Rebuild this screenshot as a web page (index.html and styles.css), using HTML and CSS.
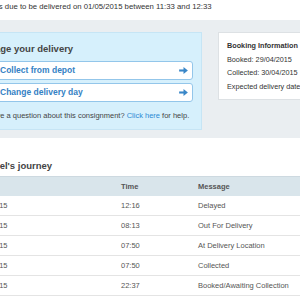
FILE: index.html
```html
<!DOCTYPE html>
<html lang="en">
<head>
  <meta charset="UTF-8">
  <title>Track your parcel</title>
  <link rel="stylesheet" href="styles.css">
</head>
<body>

  <div class="page">
    <p class="due">Your parcel is due to be delivered on 01/05/2015 between 11:33 and 12:33</p>

    <div class="band">
      <div class="manage">
        <h2>Manage your delivery</h2>
        <a class="action" href="#">
          <span>Collect from depot</span>
          <svg width="9" height="7" viewBox="0 0 10 8"><rect x="0" y="2.8" width="6" height="2.4" fill="#3a87c8"/><polygon points="5,0 10,4 5,8" fill="#3a87c8"/></svg>
        </a>
        <a class="action" href="#">
          <span>Change delivery day</span>
          <svg width="9" height="7" viewBox="0 0 10 8"><rect x="0" y="2.8" width="6" height="2.4" fill="#3a87c8"/><polygon points="5,0 10,4 5,8" fill="#3a87c8"/></svg>
        </a>
        <p class="help">Have a question about this consignment? <a href="#">Click here</a> for help.</p>
      </div>

      <div class="booking">
        <h3>Booking Information</h3>
        <p>Booked: 29/04/2015</p>
        <p>Collected: 30/04/2015</p>
        <p>Expected delivery date: 01/05/2015</p>
      </div>
    </div>

    <div class="journey">
      <h2>Your parcel's journey</h2>
      <table>
        <colgroup>
          <col class="col-date">
          <col class="col-time">
          <col>
        </colgroup>
        <thead>
          <tr><th>Date</th><th>Time</th><th>Message</th></tr>
        </thead>
        <tbody id="events"></tbody>
      </table>
    </div>
  </div>

  <script>
    const events = [
      { date: '01/05/2015', time: '12:16', msg: 'Delayed' },
      { date: '01/05/2015', time: '08:13', msg: 'Out For Delivery' },
      { date: '01/05/2015', time: '07:50', msg: 'At Delivery Location' },
      { date: '30/04/2015', time: '07:50', msg: 'Collected' },
      { date: '29/04/2015', time: '22:37', msg: 'Booked/Awaiting Collection' }
    ];

    const body = document.getElementById('events');
    events.forEach(e => {
      const tr = document.createElement('tr');
      tr.innerHTML = `<td>${e.date}</td><td>${e.time}</td><td>${e.msg}</td>`;
      body.appendChild(tr);
    });
  </script>

</body>
</html>
```

FILE: styles.css
```css
body {
  margin: 0;
  font-family: 'Liberation Sans', Arial, sans-serif;
  color: #333;
  background: #fff;
  overflow: hidden;
}

.page {
  margin-left: -70px;
  width: 480px;
}

.due {
  margin: 0;
  padding: 0 0 6px 26px;
  font-size: 7.75px;
  line-height: 14px;
}

.band {
  display: flex;
  align-items: flex-start;
  gap: 16px;
  background: #eaeef1;
  padding: 12px 0 8px 34px;
}

.manage {
  flex: none;
  width: 220px;
  background: #d6f0fc;
  border: 1px solid #c6e5f5;
  padding: 10px 8px 7px 8px;
}

.manage h2 {
  margin: 0 0 6px 3px;
  font-size: 9.5px;
  line-height: 12px;
  color: #444;
}

.action {
  display: flex;
  justify-content: space-between;
  align-items: center;
  background: #fff;
  border: 1px solid #93c6ea;
  border-radius: 3px;
  padding: 0 4px 0 26px;
  line-height: 17px;
  margin-bottom: 3px;
  font-size: 8.5px;
  font-weight: bold;
  color: #3481c4;
  text-decoration: none;
}

.help {
  margin: 8px 0 0 14px;
  font-size: 7.5px;
  line-height: 12px;
  color: #444;
  white-space: nowrap;
}

.help a {
  color: #2d8ad4;
  text-decoration: none;
}

.booking {
  flex: none;
  width: 150px;
  background: #fff;
  border: 1px solid #dde1e4;
  padding: 6px 8px 6px 8px;
  line-height: 13.5px;
}

.booking h3,
.booking p {
  margin: 0;
  font-size: 7.25px;
  white-space: nowrap;
}

.journey {
  padding-left: 26px;
}

.journey h2 {
  margin: 22px 0 4px 0;
  font-size: 9.5px;
  line-height: 12px;
  color: #444;
}

table {
  width: 100%;
  border-collapse: collapse;
  table-layout: fixed;
}

.col-date {
  width: 151px;
}

.col-time {
  width: 77px;
}

th,
td {
  text-align: left;
  padding: 0 0 0 14px;
  font-size: 7.5px;
  color: #555;
}

th {
  background: #d9e5eb;
  border-top: 1px solid #cdd9e0;
  line-height: 19px;
  font-weight: bold;
}

td {
  line-height: 19px;
  border-bottom: 1px solid #e4e4e4;
}
```
